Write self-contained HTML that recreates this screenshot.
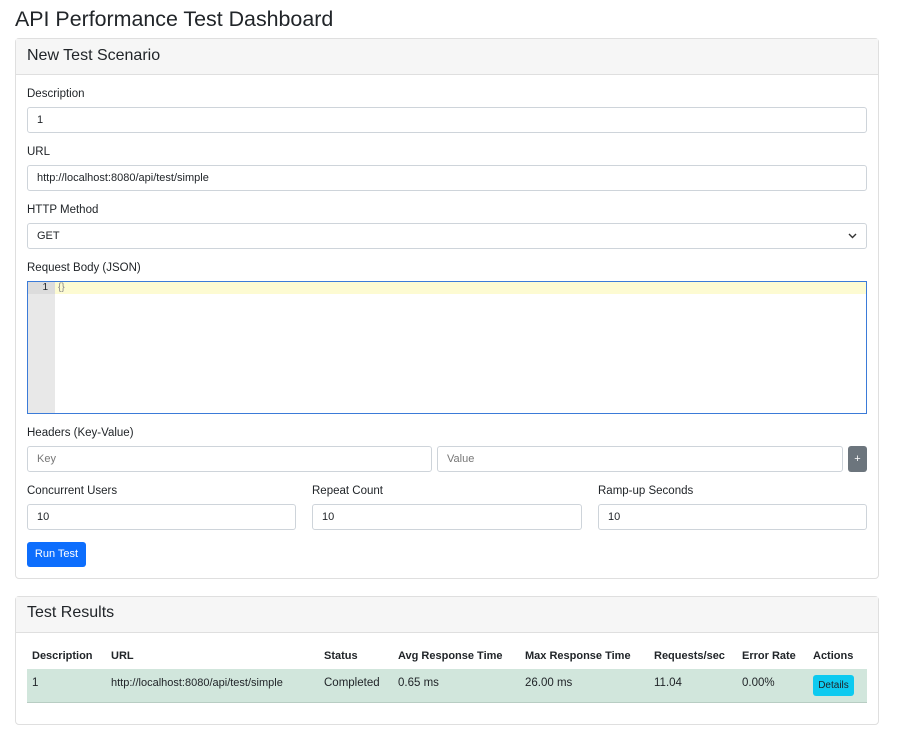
<!DOCTYPE html>
<html><head><meta charset="utf-8"><style>
*{box-sizing:border-box;margin:0;padding:0}
body{width:902px;height:742px;background:#fff;font-family:"Liberation Sans","Noto Sans CJK KR",sans-serif;color:#212529;position:relative;overflow:hidden;font-size:12px}
.a{position:absolute}
.card{position:absolute;left:15px;width:864px;border:1px solid #dfdfdf;border-radius:4px;background:#fff}
.ch{position:absolute;left:0;right:0;top:0;background:#f6f6f6;border-bottom:1px solid #dfdfdf;font-size:16px;padding-left:11px}
.inp{position:absolute;height:26px;border:1px solid #ced4da;border-radius:3px;background:#fff;font-size:11px;padding-left:9px;line-height:25px}
.lbl{position:absolute;font-size:11.5px}
</style></head><body>
<div class="a" style="left:15px;top:7px;font-size:21.4px">API Performance Test Dashboard</div>
<div class="card" style="top:38px;height:541px">
<div class="ch" style="height:36px;line-height:34px">New Test Scenario</div>
</div>
<div class="lbl" style="left:27px;top:88px">Description</div>
<div class="inp" style="left:27px;top:107px;width:840px">1</div>
<div class="lbl" style="left:27px;top:146px">URL</div>
<div class="inp" style="left:27px;top:165px;width:840px">http://localhost:8080/api/test/simple</div>
<div class="lbl" style="left:27px;top:204px">HTTP Method</div>
<div class="inp" style="left:27px;top:223px;width:840px">GET<svg class="a" style="right:9px;top:9px" width="9" height="6" viewBox="0 0 9 6"><path d="M1 1l3.5 3.5L8 1" stroke="#333" stroke-width="1.4" fill="none"/></svg></div>
<div class="lbl" style="left:27px;top:262px">Request Body (JSON)</div>
<div class="a" style="left:27px;top:281px;width:840px;height:133px;border:1px solid #3b7bd8;background:#fff">
<div class="a" style="left:0;top:0;width:27px;height:131px;background:#e8e8e8"></div>
<div class="a" style="left:0;top:0;width:27px;height:12px;background:#dcdcdc;font-size:10px;text-align:right;padding-right:7px;line-height:12px">1</div>
<div class="a" style="left:27px;top:0;right:0;height:12px;background:#fdfbd2;font-size:10px;line-height:12px;color:#888;padding-left:3px">{}</div>
</div>
<div class="lbl" style="left:27px;top:427px">Headers (Key-Value)</div>
<div class="inp" style="left:27px;top:446px;width:405px;color:#777">Key</div>
<div class="inp" style="left:437px;top:446px;width:406px;color:#777">Value</div>
<div class="a" style="left:848px;top:446px;width:19px;height:26px;background:#6c757d;border-radius:3px;color:#fff;font-size:11px;text-align:center;line-height:26px">+</div>
<div class="lbl" style="left:27px;top:485px">Concurrent Users</div>
<div class="lbl" style="left:312px;top:485px">Repeat Count</div>
<div class="lbl" style="left:598px;top:485px">Ramp-up Seconds</div>
<div class="inp" style="left:27px;top:504px;width:269px">10</div>
<div class="inp" style="left:312px;top:504px;width:270px">10</div>
<div class="inp" style="left:598px;top:504px;width:269px">10</div>
<div class="a" style="left:27px;top:542px;width:59px;height:25px;background:#0d6efd;border-radius:3px;color:#fff;font-size:11px;text-align:center;line-height:25px">Run Test</div>
<div class="card" style="top:596px;height:129px">
<div class="ch" style="height:36px;line-height:32px">Test Results</div>
</div>
<div class="a" style="left:27px;top:669px;width:840px;height:34px;background:#d1e6dc;border-bottom:1px solid #b8cdc3"></div>
<div class="a" style="left:27px;top:645px;width:840px;font-weight:bold;font-size:11px">
<span class="a" style="left:5px;top:5px">Description</span><span class="a" style="left:84px;top:5px">URL</span><span class="a" style="left:297px;top:5px">Status</span><span class="a" style="left:371px;top:5px">Avg Response Time</span><span class="a" style="left:498px;top:5px">Max Response Time</span><span class="a" style="left:627px;top:5px">Requests/sec</span><span class="a" style="left:715px;top:5px">Error Rate</span><span class="a" style="left:786px;top:5px">Actions</span>
</div>
<div class="a" style="left:27px;top:676px;width:840px;font-size:11.5px">
<span class="a" style="left:5px;top:1px">1</span><span class="a" style="left:84px;top:1px;font-size:11px">http://localhost:8080/api/test/simple</span><span class="a" style="left:297px;top:1px">Completed</span><span class="a" style="left:371px;top:1px">0.65 ms</span><span class="a" style="left:498px;top:1px">26.00 ms</span><span class="a" style="left:627px;top:1px">11.04</span><span class="a" style="left:715px;top:1px">0.00%</span>
<span class="a" style="left:786px;top:-1px;width:41px;height:21px;background:#0dcaf0;border-radius:3px;font-size:10px;text-align:center;line-height:21px">Details</span>
</div>
</body></html>
